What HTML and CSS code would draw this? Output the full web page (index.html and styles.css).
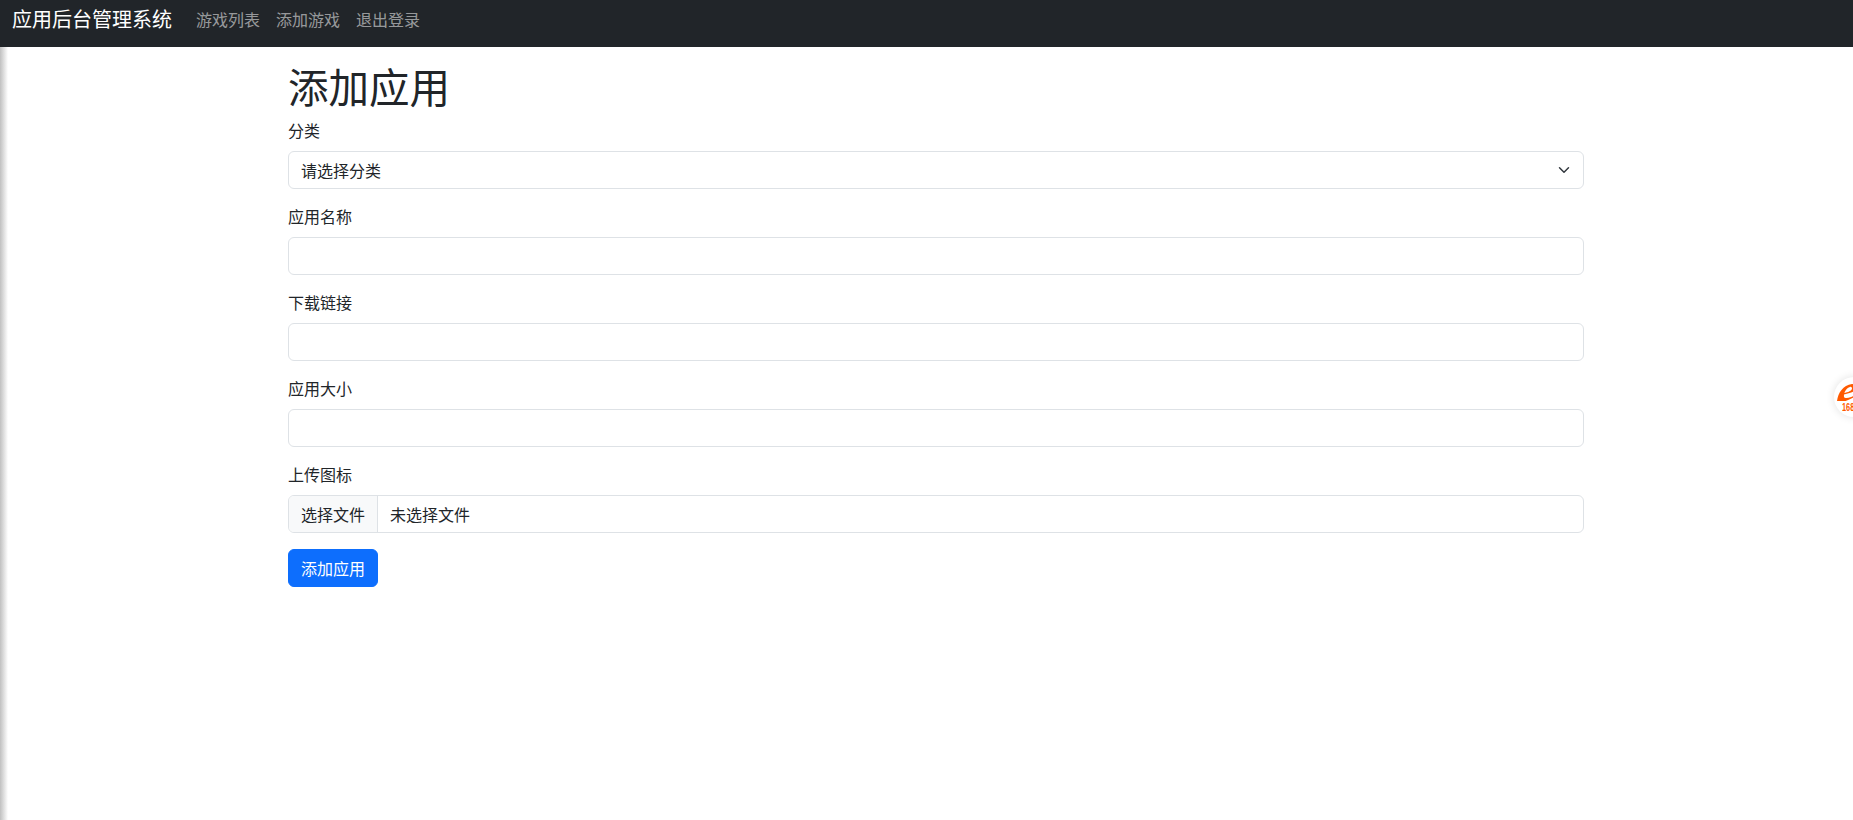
FILE: index.html
```html
<!DOCTYPE html>
<html lang="zh-CN">
<head>
<meta charset="utf-8">
<title>添加应用</title>
<link rel="stylesheet" href="styles.css">
</head>
<body>
<nav class="navbar">
  <a class="brand" href="#">应用后台管理系统</a>
  <ul class="nav-list">
    <li><a class="nav-link" href="#">游戏列表</a></li>
    <li><a class="nav-link" href="#">添加游戏</a></li>
    <li><a class="nav-link" href="#">退出登录</a></li>
  </ul>
</nav>
<main class="container">
  <h1 class="title">添加应用</h1>
  <form>
    <div class="field">
      <label class="label">分类</label>
      <div class="control select-control">
        <span>请选择分类</span>
        <svg class="chevron" viewBox="0 0 16 16" width="16" height="12"><path fill="none" stroke="#343a40" stroke-linecap="round" stroke-linejoin="round" stroke-width="2" d="m2 5 6 6 6-6"/></svg>
      </div>
    </div>
    <div class="field">
      <label class="label">应用名称</label>
      <div class="control"></div>
    </div>
    <div class="field">
      <label class="label">下载链接</label>
      <div class="control"></div>
    </div>
    <div class="field">
      <label class="label">应用大小</label>
      <div class="control"></div>
    </div>
    <div class="field">
      <label class="label">上传图标</label>
      <div class="control file-control">
        <span class="file-button">选择文件</span>
        <span class="file-name">未选择文件</span>
      </div>
    </div>
    <button class="submit" type="button">添加应用</button>
  </form>
</main>
<div class="edge-shadow"></div>
<div class="widget">
  <svg viewBox="0 0 24 17" width="24" height="17"><path fill="#ff5a00" d="M0 17C1 9 6 1 15 0c3 0 5 1 6 3 0 3-6 6-14 7.500V9c4-.5 8-2.500 8-4.500 0-1-1-2-2-1.500C9 4 6.500 9 7 13c1 2 7 1 13-3l1 1c-7 4-16 9-21 6Z"/></svg>
  <span class="widget-text">168</span>
</div>
</body>
</html>
```
FILE: styles.css
```css
* { box-sizing: border-box; }
html, body { margin: 0; height: 100%; overflow: hidden; }
body {
  font-family: "Noto Sans CJK SC", "Liberation Sans", sans-serif;
  font-size: 16px;
  line-height: 24px;
  color: #212529;
  background: #fff;
}
a { text-decoration: none; }
.navbar {
  display: flex;
  align-items: center;
  height: 47px;
  padding: 0 12px 10px;
  background: #212529;
}
.brand {
  margin-right: 16px;
  font-size: 20px;
  line-height: 30px;
  color: #fff;
}
.nav-list {
  display: flex;
  margin: 0;
  padding: 0;
  list-style: none;
}
.nav-link {
  display: block;
  padding: 8px;
  color: rgba(255, 255, 255, .55);
}
.container {
  width: 1320px;
  margin-left: 276px;
  padding: 0 12px;
}
.title {
  margin: 16px 0 10px;
  font-size: 40.5px;
  font-weight: 400;
  line-height: 46px;
}
.field { margin-bottom: 16px; }
.label {
  display: block;
  margin-bottom: 10px;
  line-height: 22px;
}
.control {
  display: flex;
  align-items: center;
  height: 38px;
  padding: 0 12px;
  border: 1px solid #dee2e6;
  border-radius: 6px;
  background: #fff;
  overflow: hidden;
}
.select-control { justify-content: space-between; }
.chevron { flex: none; margin-right: -1px; }
.file-control { padding: 0; }
.file-button {
  display: flex;
  align-items: center;
  height: 100%;
  padding: 0 12px;
  background: #f8f9fa;
  border-right: 1px solid #dee2e6;
}
.file-name { padding: 0 12px; }
.submit {
  display: block;
  height: 38px;
  padding: 0 12px;
  border: 1px solid #0d6efd;
  border-radius: 6px;
  background: #0d6efd;
  color: #fff;
  font: inherit;
}
.edge-shadow {
  position: absolute;
  top: 47px;
  left: 0;
  bottom: 0;
  width: 8px;
  background: linear-gradient(to right, #c0c0c0, #fff);
}
.widget {
  position: absolute;
  top: 377px;
  left: 1834px;
  width: 40px;
  height: 40px;
  padding: 7px 0 0 3px;
  border-radius: 50%;
  background: #fff;
  box-shadow: 0 0 8px rgba(0, 0, 0, .12);
}
.widget svg { display: block; }
.widget-text {
  display: block;
  width: 14px;
  margin: 2px 0 0 5px;
  font-family: "Liberation Sans", sans-serif;
  font-size: 10px;
  font-weight: 700;
  line-height: 10px;
  color: #ff5a00;
  transform: scaleX(.74);
  transform-origin: left center;
}
```
